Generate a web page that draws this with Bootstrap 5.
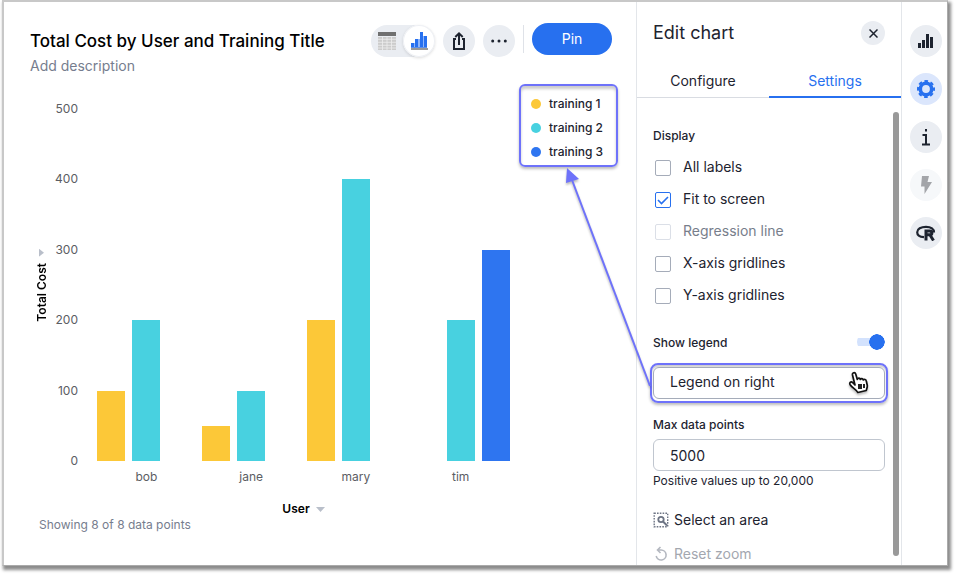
<!DOCTYPE html>
<html lang="en">
<head>
<meta charset="utf-8">
<meta name="viewport" content="width=device-width, initial-scale=1">
<title>Total Cost by User and Training Title</title>
<link rel="stylesheet" href="https://cdn.jsdelivr.net/npm/bootstrap@5.3.0/dist/css/bootstrap.min.css">
<style>
  :root { --ink:#1d232f; --blue:#2770ef; --grey:#777e8b; --disc:#eaedf2; --mark-line:#6e72fa; --yellow:#fcc838; --teal:#48d1e0; }
  body { font-family: Inter, "Liberation Sans", sans-serif; font-size: 14px; line-height: 20px; color: var(--ink); background:#fff; padding: 0 7px 9px 2px; }
  .app-frame { border: 2px solid #c8c8c8; border-width: 2px 1px 1px 2px; border-right-color:#aaa; border-bottom-color:#aaa; box-shadow: 2px 3px 3px 1px #8c8c8c; background:#fff; min-height: calc(100vh - 9px); }
  .chart-side { padding: 21px 24px 24px 26px; min-width: 0; }
  .chart-title { font-size: 17px; line-height: 24px; font-weight: 500; color:#000; margin: 6px 0 3px; }
  .desc-link { color: #767d8e; text-decoration: none; display:block; }
  .disc { width: 32px; height: 32px; border: 0; padding: 0; border-radius: 50%; background: var(--disc); color: var(--ink); display: flex; align-items: center; justify-content: center; flex: none; }
  .disc.sm-disc { width: 24px; height: 24px; }
  .disc.on { background:#dbe6fc; color: var(--blue); }
  .disc:disabled { background:#f6f8fa; color:#a3a5a9; }
  .toolbar-set { padding-top: 2px; }
  .view-switch { background: var(--disc); border-radius: 16px; }
  .view-switch .disc { background: transparent; }
  .view-switch .disc.picked { background:#fff; box-shadow: inset 0 0 0 1px #eef0f4, 0 1px 3px #0002; }
  .toolbar-line { width: 1px; height: 28px; background:#dfe2e8; }
  .pin-btn { width: 80px; height: 32px; border-radius: 16px; background: var(--blue); color:#fff; border: 0; padding: 0; line-height: 30px; }
  .axis-btn { background: none; border: 0; padding: 0; font-size: 12px; line-height: 16px; font-weight: 600; color:#000; display:flex; align-items:center; gap: 6px; }
  .axis-btn.upright { writing-mode: vertical-rl; transform: rotate(180deg); }
  .axis-title, .tick-col, .bars { height: 368px; }
  .tick-col { width: 28px; font-size: 12px; line-height: 16px; color:#5b5d63; text-align: right; }
  .chart-area { padding: 25px 0 0 4px; margin-right: -6px; }
  .bars { padding: 8px 0; }
  .bars-group { flex: 1; display: grid; grid-template-columns: repeat(3, 1fr); align-items: end; justify-items: center; }
  .bar { width: 80%; }
  .t1 { background: var(--yellow); } .t2 { background: var(--teal); } .t3 { background:#2e75f0; }
  .cat-names { font-size: 12px; line-height: 16px; color:#5b5d63; }
  .legend-box { border: 2px solid var(--mark-line); border-radius: 6px; width: 99px; padding: 6px 0 1px 10px; box-shadow: 0 2px 3px #0004, inset 0 3px 3px #0003; font-size: 12px; line-height: 24px; font-weight: 500; margin-left: 6px; margin-top: -17px; align-self: flex-start; }
  .dot { width: 10px; height: 10px; border-radius: 50%; flex: none; }
  .foot-note { font-size: 12px; line-height: 16px; color: #767d8e; padding-left: 9px; }
  .edit-side { width: 265px; flex: none; border-left: 1px solid #e3e6ea; }
  .panel-title { font-size: 18px; line-height: 24px; font-weight: 400; margin: 0; }
  .panel-head { padding: 19px 16px 0; }
  .tabs-row { margin-top: 17px; }
  .tab-btn { flex: 1; background: none; border: 0; border-bottom: 1px solid #d9dce2; height: 36px; padding: 2px 0 0; color: var(--ink); }
  .tab-btn.picked { color: var(--blue); border-bottom: 2px solid var(--blue); padding-top: 3px; }
  .panel-body { padding: 28px 8px 0 16px; min-width: 0; }
  .field-name { font-size: 12px; line-height: 20px; font-weight: 500; }
  .check-list { padding: 6px 0 21px; }
  .check-line { height: 32px; display: flex; align-items: center; gap: 12px; padding-left: 2px; }
  .check-line input { appearance: none; width: 16px; height: 16px; border: 1px solid #a5acb9; border-radius: 2px; margin: 0; flex: none; background:#fff; }
  .check-line input:checked { border-color: var(--blue); background: #fff url("data:image/svg+xml,%3Csvg xmlns='http://www.w3.org/2000/svg' viewBox='0 0 14 14'%3E%3Cpath d='M2 7l3.5 3.5L12 4' fill='none' stroke='%232770ef' stroke-width='1.6'/%3E%3C/svg%3E"); }
  .check-line input:disabled { border-color:#dbdfe7; }
  .check-line input:disabled + label { color: var(--grey); }
  .check-line label { margin-bottom: 2px; }
  .legend-switch { appearance: none; width: 28px; height: 16px; margin: 0 0 2px; background: radial-gradient(circle at 20px 8px, var(--blue) 7.5px, transparent 8px), linear-gradient(#d3e2fd, #d3e2fd) 0 4px / 20px 8px no-repeat; border-radius: 8px; }
  .text-field { width: 100%; height: 32px; border: 1px solid #c0c6cf; border-radius: 6px; padding: 0 16px; color: var(--ink); background:#fff; appearance: none; display: block; }
  select.text-field { border-color:#a5acb9; padding-bottom: 2px; }
  .mark-box { border: 2px solid var(--mark-line); border-radius: 8px; padding: 2px 1px; margin: 10px -3px 12px; box-shadow: 0 2px 3px #0004, inset 0 2px 2px #0003; position: relative; }
  .hand { position: absolute; right: 16px; top: 6px; pointer-events: none; filter: drop-shadow(0 2px 1px #0004); }
  .tool-btn { background: none; border: 0; padding: 0; display: flex; align-items: center; gap: 5px; color: var(--ink); }
  .tool-btn:disabled { color:#a3a7af; }
  .tool-list { display: grid; gap: 14px; padding-top: 19px; }
  .scroll-bar { width: 6px; background:#999; border-radius: 3px; margin: 14px 2px 9px 0; flex: none; }
  .rail { width: 46px; flex: none; border-left: 1px solid #e3e6ea; padding: 23px 0 0 2px; gap: 16px; }
  .arrow-layer { position: absolute; left: 0; top: 0; pointer-events: none; filter: drop-shadow(0 2px 1px #0004); }
</style>
<script src="https://cdn.jsdelivr.net/npm/bootstrap@5.3.0/dist/js/bootstrap.bundle.min.js"></script>
</head>
<body class="position-relative">
<div class="app-frame d-flex">
  <main class="chart-side flex-fill d-flex flex-column">
    <header class="d-flex align-items-start">
      <div class="flex-fill">
        <h1 class="chart-title text-nowrap">Total Cost by User and Training Title</h1>
        <a class="desc-link" href="#">Add description</a>
      </div>
      <div class="d-flex gap-2 align-items-start">
        <div class="toolbar-set d-flex gap-2">
          <div class="view-switch d-flex">
            <button class="disc" aria-label="Table view"><svg width="18" height="18" viewBox="0 0 18 18"><path fill="#ccc" d="M0 5h18v13H0z"/><path fill="#707070" d="M0 0h18v4H0z"/><path stroke="#eee" stroke-width=".8" d="M0 7.3h18M0 10.3h18M0 13.3h18M0 16h18M4.5 5v13M9 5v13M13.5 5v13"/></svg></button>
            <button class="disc picked" aria-label="Chart view"><svg width="18" height="18" viewBox="0 0 18 18"><path fill="#2770ef" d="M1 11h3v4H1zM5 7h3v8H5zM10 0h3v15h-3zM14 4h3v11h-3z"/><path fill="#8fb6fa" d="M8 7h2v8H8zM4 11h1v4H4zM13 4h1v11h-1z"/><path fill="#5d8fe8" d="M1 15h16v1H1z"/><path fill="#999" d="M1 16h17v2H1z"/></svg></button>
          </div>
          <button class="disc" aria-label="Share"><svg width="16" height="20" viewBox="0 0 16 20" fill="none" stroke="currentColor" stroke-width="2"><path d="M5 8H3v10h10V8h-2M8 14V3M4.300 6 8 2.300 11.700 6"/></svg></button>
          <button class="disc" aria-label="More"><svg width="16" height="4" viewBox="0 0 16 4" fill="currentColor"><circle cx="1.700" cy="2" r="1.500"/><circle cx="8" cy="2" r="1.500"/><circle cx="14.300" cy="2" r="1.500"/></svg></button>
          <div class="toolbar-line"></div>
        </div>
        <button class="pin-btn">Pin</button>
      </div>
    </header>
    <section class="chart-area d-flex">
      <div class="axis-title d-flex align-items-center"><button class="axis-btn upright">Total Cost <svg width="5" height="8" viewBox="0 0 5 8"><path fill="#b9bfca" d="M5 0v8L0 4z"/></svg></button></div>
      <div class="tick-col d-flex flex-column justify-content-between"><span>500</span><span>400</span><span>300</span><span>200</span><span>100</span><span>0</span></div>
      <div class="flex-fill ps-3">
        <div class="bars d-flex">
          <div class="bars-group h-100"><div class="bar t1" style="height:20%"></div><div class="bar t2" style="height:40%"></div></div>
          <div class="bars-group h-100"><div class="bar t1" style="height:10%"></div><div class="bar t2" style="height:20%"></div></div>
          <div class="bars-group h-100"><div class="bar t1" style="height:40%"></div><div class="bar t2" style="height:80%"></div></div>
          <div class="bars-group h-100"><span></span><div class="bar t2" style="height:40%"></div><div class="bar t3" style="height:60%"></div></div>
        </div>
        <div class="cat-names row g-0 text-center"><span class="col">bob</span><span class="col">jane</span><span class="col">mary</span><span class="col">tim</span></div>
        <div class="d-flex justify-content-center pt-3"><button class="axis-btn">User <svg width="9" height="5" viewBox="0 0 9 5"><path fill="#b9bfca" d="M0 0h9L4.500 5z"/></svg></button></div>
      </div>
      <div class="legend-box flex-shrink-0">
        <div class="d-flex align-items-center gap-2"><span class="dot t1"></span>training 1</div>
        <div class="d-flex align-items-center gap-2"><span class="dot t2"></span>training 2</div>
        <div class="d-flex align-items-center gap-2"><span class="dot t3"></span>training 3</div>
      </div>
    </section>
    <div class="foot-note">Showing 8 of 8 data points</div>
  </main>
  <aside class="edit-side d-flex flex-column">
    <div class="panel-head d-flex justify-content-between align-items-center">
      <h2 class="panel-title">Edit chart</h2>
      <button class="disc sm-disc" aria-label="Close"><svg width="9" height="9" viewBox="0 0 9 9" stroke="currentColor" stroke-width="1.500"><path d="M.5.5l8 8M8.500.5l-8 8"/></svg></button>
    </div>
    <div class="tabs-row d-flex"><button class="tab-btn">Configure</button><button class="tab-btn picked">Settings</button></div>
    <div class="d-flex flex-fill">
      <div class="panel-body flex-fill">
        <div class="field-name">Display</div>
        <div class="check-list">
          <div class="check-line"><input type="checkbox" id="c1"><label for="c1">All labels</label></div>
          <div class="check-line"><input type="checkbox" id="c2" checked><label for="c2">Fit to screen</label></div>
          <div class="check-line"><input type="checkbox" id="c3" disabled><label for="c3">Regression line</label></div>
          <div class="check-line"><input type="checkbox" id="c4"><label for="c4">X-axis gridlines</label></div>
          <div class="check-line"><input type="checkbox" id="c5"><label for="c5">Y-axis gridlines</label></div>
        </div>
        <div class="d-flex justify-content-between align-items-center"><label class="field-name" for="sw">Show legend</label><input class="legend-switch" type="checkbox" role="switch" id="sw" checked></div>
        <div class="mark-box">
          <select class="text-field" aria-label="Legend position"><option>Legend on right</option></select>
          <svg class="hand" width="22" height="24" viewBox="0 0 22 24"><path fill="#fff" stroke="#111" stroke-width="1.700" stroke-linejoin="round" d="M7 14 4.500 4C4 1.500 7 .8 7.700 3l1.600 5.500C10 6.500 12 7 12.300 8.500c.8-1.500 2.700-1 3 .5 1-1.200 2.700-.6 3 1l1 4.500c.2 2-.8 3.500-1 5l-8.500 2C8.500 18.500 4 17 2 13.500c-1-2 1-3.300 2.500-2z"/><path fill="#222" d="M10 13h4v5h-4zM15 13h2v4h-2z"/></svg>
        </div>
        <label class="field-name d-block mb-1" for="maxp">Max data points</label>
        <input class="text-field" id="maxp" type="text" value="5000">
        <div class="field-name fw-normal">Positive values up to 20,000</div>
        <div class="tool-list">
          <button class="tool-btn"><svg width="16" height="16" viewBox="0 0 16 16" fill="none" stroke="#6d7484"><path stroke-width="1.400" stroke-dasharray="1.600 1.200" d="M1.200 1.200h13.500v13.500H1.200z"/><circle cx="8" cy="7.500" r="2.700" stroke-width="1.800"/><path stroke-width="2" d="m10 9.500 4 4"/></svg>Select an area</button>
          <button class="tool-btn" disabled><svg width="16" height="16" viewBox="0 0 16 16" fill="none" stroke="#b4b8c0" stroke-width="1.600"><path d="M3.200 10a5 5 0 1 0 4.800-6H4.500M7.500 1 4.500 4l3 3"/></svg>Reset zoom</button>
        </div>
      </div>
      <div class="scroll-bar"></div>
    </div>
  </aside>
  <nav class="rail d-flex flex-column align-items-center" aria-label="Panels">
    <button class="disc" aria-label="Chart"><svg width="16" height="16" viewBox="0 0 16 16" fill="currentColor"><path d="M0 10h3v5H0zM4 7h3v8H4zM8 1h3v14H8zM12 4h3v11h-3z"/></svg></button>
    <button class="disc on" aria-label="Settings"><svg width="18" height="18" viewBox="0 0 18 18" fill="none" stroke="currentColor"><circle cx="9" cy="9" r="5.700" stroke-width="3.600"/><circle cx="9" cy="9" r="8" stroke-width="2" stroke-dasharray="3.640 2.640" stroke-dashoffset="1.820"/></svg></button>
    <button class="disc" aria-label="Info"><svg width="10" height="18" viewBox="0 0 10 18" fill="none" stroke="currentColor" stroke-width="2"><path d="M1.500 7H5v9M1 16.500h8M5 1v2.500"/></svg></button>
    <button class="disc" aria-label="Actions" disabled><svg width="12" height="18" viewBox="0 0 12 18" fill="currentColor"><path d="M2 0h7L7.500 6H12L4.500 18V10.500H1z"/></svg></button>
    <button class="disc" aria-label="R analysis"><svg width="20" height="16" viewBox="0 0 20 16" fill="none" stroke="currentColor"><path stroke-width="2.200" d="M18 7.500C18.300 4 15 1.800 10 1.800S1.200 4 1.200 7.200 4.500 12 8 12.200"/><path stroke-width="3" d="M10 15.500V6h3.800c2.800 0 2.800 3.800 0 3.800H10M14 10l3.500 5.500"/></svg></button>
  </nav>
</div>
<svg class="arrow-layer" width="660" height="400" viewBox="0 0 660 400"><path d="M650 386 572 180" stroke="#6e72fa" stroke-width="2"/><path fill="#6e72fa" d="M567 168l12 11-13 4z"/></svg>
</body>
</html>
